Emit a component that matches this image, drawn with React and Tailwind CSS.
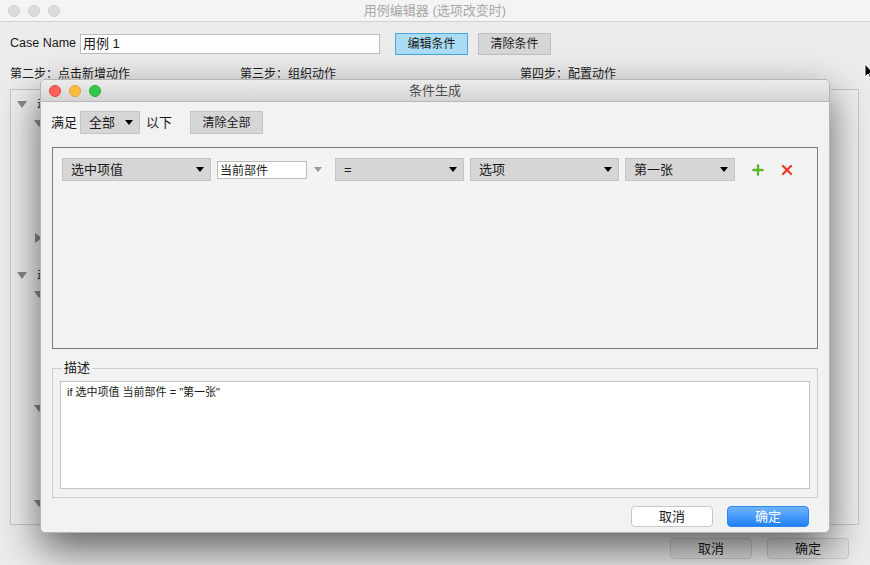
import { Plus, X } from 'lucide-react'

const font = { fontFamily: '"Liberation Sans", "Noto Sans CJK SC", sans-serif' }

function Caret({ color = 'border-t-black' }) {
    return <span className={`inline-block w-0 h-0 border-l-[4px] border-r-[4px] border-t-[5px] border-l-transparent border-r-transparent ${color}`} />
}

function Select({ label, w }) {
    return (
        <div className={`${w} h-[23px] flex items-center justify-between pl-[8px] pr-[6px] bg-[#d6d6d6] border border-[#c4c4c4] text-[13px] text-[#1a1a1a]`}>
            <span>{label}</span>
            <Caret />
        </div>
    )
}

function Tri({ right }) {
    return right
        ? <span className="inline-block w-0 h-0 border-t-[5px] border-b-[5px] border-l-[7px] border-t-transparent border-b-transparent border-l-[#8a8a8a]" />
        : <span className="inline-block w-0 h-0 border-l-[5px] border-r-[5px] border-t-[7px] border-l-transparent border-r-transparent border-t-[#8a8a8a]" />
}

function Light({ c }) {
    return <span className={`w-[12px] h-[12px] rounded-full ${c}`} />
}

export default function App() {
    return (
        <div className="relative w-[870px] h-[565px] overflow-hidden bg-[#ececec] text-[#1a1a1a]" style={font}>
            {/* Main window */}
            <div className="h-[22px] flex items-center border-b border-[#d2d2d2] bg-[#f4f4f4] relative">
                <div className="flex gap-[8px] pl-[8px]">
                    <Light c="bg-[#dcdcdc] border border-[#d0d0d0]" />
                    <Light c="bg-[#dcdcdc] border border-[#d0d0d0]" />
                    <Light c="bg-[#dcdcdc] border border-[#d0d0d0]" />
                </div>
                <div className="flex-1 text-center text-[13px] text-[#a8a8a8] pr-[60px]">用例编辑器 (选项改变时)</div>
            </div>

            <div className="flex items-center pl-[10px] mt-[10px] h-[23px]">
                <span className="text-[12.5px] w-[70px] shrink-0 whitespace-nowrap">Case Name</span>
                <div className="w-[300px] h-[20px] bg-white border border-[#bdbdbd] text-[13px] flex items-center pl-[2px]">用例 1</div>
                <div className="ml-[15px] w-[73px] h-[22px] flex items-center justify-center bg-[#aadcf5] border border-[#4aa6dc] text-[12px]">编辑条件</div>
                <div className="ml-[10px] w-[73px] h-[22px] flex items-center justify-center bg-[#d6d6d6] border border-[#c0c0c0] text-[12px]">清除条件</div>
            </div>

            <div className="flex pl-[10px] mt-[11px] text-[12px] h-[16px] items-center">
                <span className="w-[230px]">第二步：点击新增动作</span>
                <span className="w-[280px]">第三步：组织动作</span>
                <span>第四步：配置动作</span>
            </div>

            <div className="ml-[10px] mt-[7px] w-[849px] h-[436px] border border-[#c8c8c8] bg-[#efefef] relative">
                <div className="flex flex-col pl-[6px] pt-[5px]">
                    <div className="h-[19px] flex items-center gap-[10px]"><Tri /><span className="text-[12px]">动</span></div>
                    <div className="h-[19px] flex items-center pl-[17px]"><Tri /></div>
                    <div className="h-[95px]" />
                    <div className="h-[19px] flex items-center pl-[18px]"><Tri right /></div>
                    <div className="h-[19px]" />
                    <div className="h-[19px] flex items-center gap-[10px]"><Tri /><span className="text-[12px]">动</span></div>
                    <div className="h-[19px] flex items-center pl-[17px]"><Tri /></div>
                    <div className="h-[95px]" />
                    <div className="h-[19px] flex items-center pl-[17px]"><Tri /></div>
                    <div className="h-[76px]" />
                    <div className="h-[19px] flex items-center pl-[17px]"><Tri /></div>
                </div>
            </div>

            <div className="flex justify-end gap-[15px] pr-[21px] mt-[13px]">
                <div className="w-[82px] h-[21px] rounded-[4px] bg-[#e4e4e4] border border-[#cbcbcb] flex items-center justify-center text-[13px]">取消</div>
                <div className="w-[82px] h-[21px] rounded-[4px] bg-[#e4e4e4] border border-[#cbcbcb] flex items-center justify-center text-[13px]">确定</div>
            </div>

            {/* Cursor */}
            <svg className="absolute left-[864px] top-[63px]" width="10" height="17" viewBox="0 0 10 17">
                <path d="M1 1 L1 14 L4 11 L6.5 16 L8 15.3 L5.6 10.5 L9.5 10.5 Z" fill="#000" stroke="#fff" strokeWidth="1" />
            </svg>

            {/* Dialog window */}
            <div className="absolute left-[40px] top-[79px] w-[790px] h-[454px] rounded-[5px] border border-[#b4b4b4] bg-[#f2f2f2] shadow-[0_16px_40px_rgba(0,0,0,0.6)] flex flex-col overflow-hidden">
                <div className="h-[22px] shrink-0 flex items-center bg-gradient-to-b from-[#ececec] to-[#d4d4d4] border-b border-[#b8b8b8]">
                    <div className="flex gap-[8px] pl-[8px]">
                        <Light c="bg-[#fc605c] border border-[#e0443e]" />
                        <Light c="bg-[#fdbc40] border border-[#dea236]" />
                        <Light c="bg-[#34c84a] border border-[#27aa35]" />
                    </div>
                    <div className="flex-1 text-center text-[13px] text-[#4d4d4d] pr-[60px]">条件生成</div>
                </div>

                <div className="flex items-center pl-[10px] mt-[9px] h-[23px] text-[13px]">
                    <span>满足</span>
                    <div className="ml-[3px]"><Select label="全部" w="w-[60px]" /></div>
                    <span className="ml-[6px]">以下</span>
                    <div className="ml-[18px] w-[73px] h-[23px] flex items-center justify-center bg-[#d6d6d6] border border-[#c4c4c4] text-[12px]">清除全部</div>
                </div>

                <div className="mx-[11px] mt-[13px] h-[202px] border border-[#7c7c7c] bg-[#f3f3f3]">
                    <div className="flex items-center pl-[9px] mt-[10px]">
                        <Select label="选中项值" w="w-[149px]" />
                        <div className="ml-[6px] w-[90px] h-[18px] bg-white border border-[#bdbdbd] text-[12px] flex items-center pl-[2px] pt-[2px]">当前部件</div>
                        <span className="ml-[7px] mr-[13px] flex"><Caret color="border-t-[#9a9a9a]" /></span>
                        <Select label="=" w="w-[129px]" />
                        <div className="ml-[6px]"><Select label="选项" w="w-[149px]" /></div>
                        <div className="ml-[6px]"><Select label="第一张" w="w-[110px]" /></div>
                        <Plus className="ml-[15px] text-[#5db52f]" size={16} strokeWidth={3.5} />
                        <X className="ml-[13px] text-[#ec3a2c]" size={16} strokeWidth={3.5} />
                    </div>
                </div>

                <fieldset className="mx-[11px] mt-[12px] h-[137px] border border-[#cdcdcd] px-[7px] pb-[7px]">
                    <legend className="ml-[2px] px-[2px] text-[13px] leading-[14px]">描述</legend>
                    <div className="h-[108px] mt-[6px] bg-white border border-[#c4c4c4] text-[11px] pl-[6px] pt-[2px]">if 选中项值 当前部件 = "第一张"</div>
                </fieldset>

                <div className="flex justify-end gap-[14px] pr-[20px] mt-[8px]">
                    <div className="w-[82px] h-[21px] rounded-[4px] bg-white border border-[#c8c8c8] flex items-center justify-center text-[13px]">取消</div>
                    <div className="w-[82px] h-[21px] rounded-[4px] bg-gradient-to-b from-[#6cb3fa] to-[#1b7ff7] border border-[#2f86f0] flex items-center justify-center text-[13px] text-white">确定</div>
                </div>
            </div>
        </div>
    )
}
